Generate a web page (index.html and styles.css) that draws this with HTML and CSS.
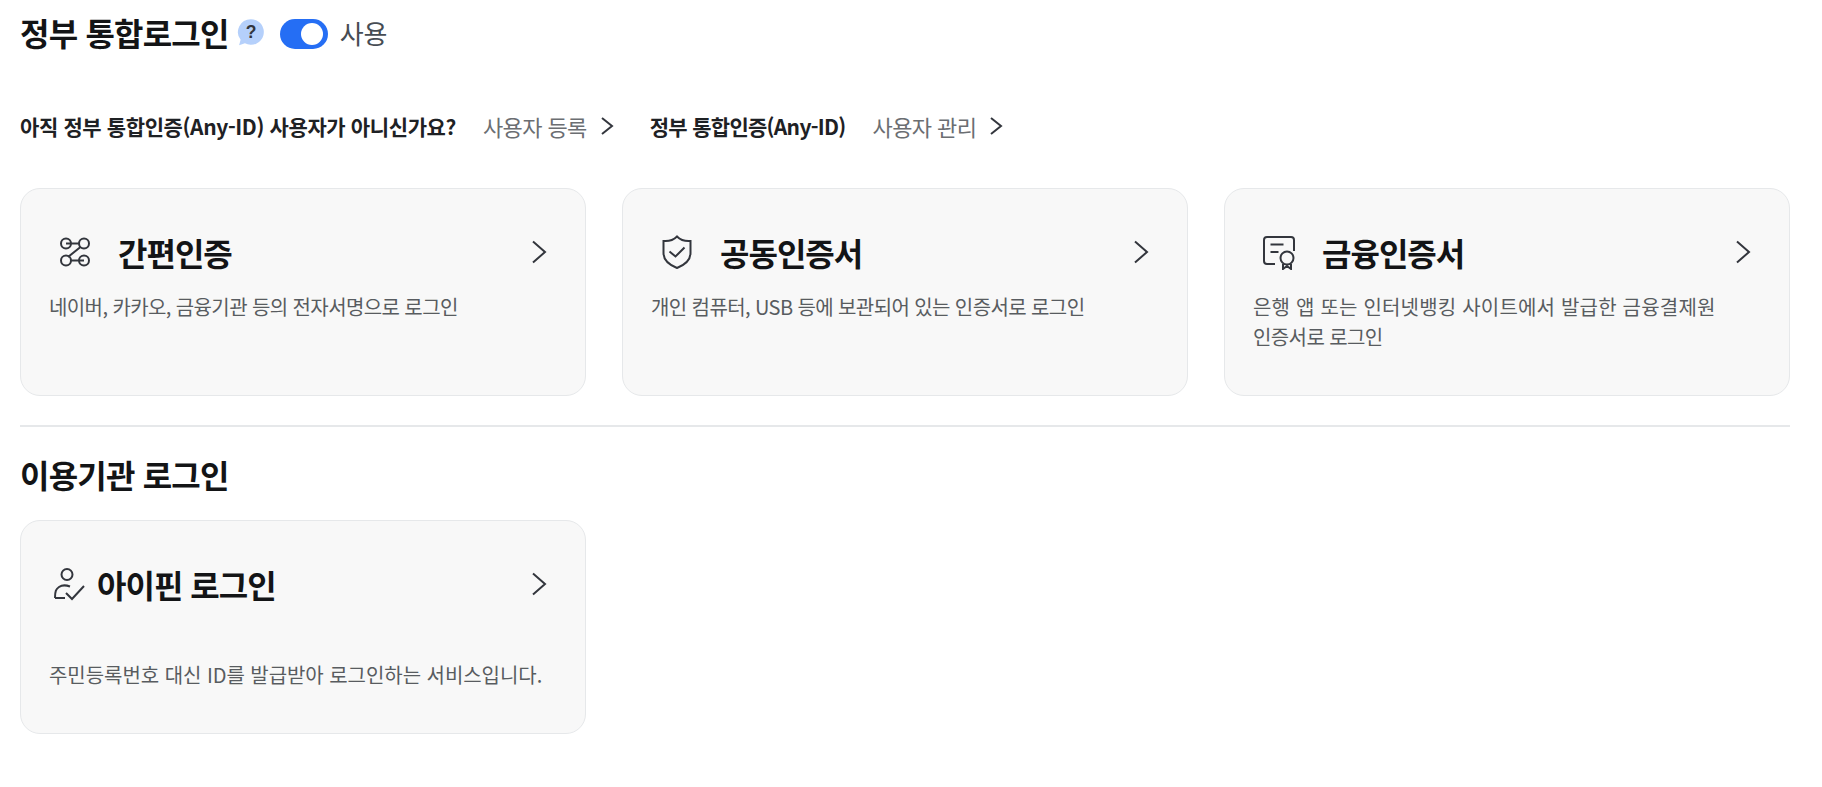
FILE: index.html
```html
<!DOCTYPE html>
<html lang="ko">
<head>
  <meta charset="UTF-8">
  <meta name="viewport" content="width=device-width, initial-scale=1.0">
  <title>정부 통합로그인</title>
  <link rel="stylesheet" href="styles.css">
</head>
<body>
  <div class="page">
    <div class="title-row">
      <h2 class="title">정부 통합로그인</h2>
      <svg class="help" width="28" height="28" viewBox="2 2 24 24">
        <path d="M14 3a11 11 0 1 1-5.2 20.7L3.800 25.400l1.300-4.700A11 11 0 0 1 14 3z" fill="#b5d0fb"/>
        <text x="14" y="19" text-anchor="middle" class="help-mark">?</text>
      </svg>
      <span class="toggle"><span class="toggle-knob"></span></span>
      <span class="toggle-label">사용</span>
    </div>

    <div class="links">
      <strong class="links-text">아직 정부 통합인증(Any-ID) 사용자가 아니신가요?</strong>
      <a class="link">사용자 등록
        <svg class="link-arrow" width="14" height="20" viewBox="0 0 14 20"><path d="M2 2l10 8-10 8"/></svg>
      </a>
      <strong class="links-text links-second">정부 통합인증(Any-ID)</strong>
      <a class="link">사용자 관리
        <svg class="link-arrow" width="14" height="20" viewBox="0 0 14 20"><path d="M2 2l10 8-10 8"/></svg>
      </a>
    </div>

    <div class="cards">
      <div class="card">
        <div class="card-head">
          <svg class="card-icon" width="36" height="36" viewBox="0 0 36 36">
            <circle cx="9" cy="9.500" r="5"/><circle cx="27" cy="9.500" r="5"/>
            <circle cx="9" cy="26.500" r="5"/><circle cx="27" cy="26.500" r="5"/>
            <path d="M9 9.500h13M14 26.500h13M11 23L23.500 13"/>
          </svg>
          <h3 class="card-title">간편인증</h3>
          <svg class="card-arrow" width="16" height="24" viewBox="0 0 16 24"><path d="M2 1.500L14 12 2 22.500"/></svg>
        </div>
        <p class="card-desc">네이버, 카카오, 금융기관 등의 전자서명으로 로그인</p>
      </div>

      <div class="card">
        <div class="card-head">
          <svg class="card-icon" width="36" height="36" viewBox="0 0 36 36">
            <path d="M18 2.500c3 3 8 5 13.500 4.500v12c0 7-6 12-13.500 15C10.500 31 4.500 26 4.500 19V7C10 7.500 15 5.500 18 2.500z"/>
            <path d="M10.500 17.500l6 5 9-9"/>
          </svg>
          <h3 class="card-title">공동인증서</h3>
          <svg class="card-arrow" width="16" height="24" viewBox="0 0 16 24"><path d="M2 1.500L14 12 2 22.500"/></svg>
        </div>
        <p class="card-desc">개인 컴퓨터, USB 등에 보관되어 있는 인증서로 로그인</p>
      </div>

      <div class="card">
        <div class="card-head">
          <svg class="card-icon" width="36" height="36" viewBox="0 0 36 36">
            <path d="M14 30H6a3 3 0 0 1-3-3V6a3 3 0 0 1 3-3h24a3 3 0 0 1 3 3v11"/>
            <path d="M9.500 10.500h13M9.500 18h8"/>
            <circle cx="26" cy="24" r="6.500"/>
            <path d="M22 30v5l4-3 4 3v-5"/>
          </svg>
          <h3 class="card-title">금융인증서</h3>
          <svg class="card-arrow" width="16" height="24" viewBox="0 0 16 24"><path d="M2 1.500L14 12 2 22.500"/></svg>
        </div>
        <p class="card-desc"><span class="desc-wide">은행 앱 또는 인터넷뱅킹 사이트에서 발급한 금융결제원</span><br>인증서로 로그인</p>
      </div>
    </div>

    <hr class="divider">

    <h2 class="title section-title">이용기관 로그인</h2>

    <div class="cards">
      <div class="card card-tall">
        <div class="card-head card-head-tight">
          <svg class="card-icon" width="36" height="36" viewBox="0 0 36 36">
            <circle cx="15" cy="8.500" r="5.500"/>
            <path d="M3 32c0-7 1-9 4-11 2.500-1.700 7-2 11-.5M3 32h10M14 27l6 6 12-13"/>
          </svg>
          <h3 class="card-title">아이핀 로그인</h3>
          <svg class="card-arrow" width="16" height="24" viewBox="0 0 16 24"><path d="M2 1.500L14 12 2 22.500"/></svg>
        </div>
        <p class="card-desc">주민등록번호 대신 ID를 발급받아 로그인하는 서비스입니다.</p>
      </div>
    </div>
  </div>
</body>
</html>
```

FILE: styles.css
```css
* {
  box-sizing: border-box;
}

body {
  margin: 0;
  font-family: "Noto Sans CJK KR", "Noto Sans", sans-serif;
  background-color: #fff;
  color: #1e2124;
}

.page {
  padding: 10px 32px 0 20px;
}

.title-row {
  display: flex;
  align-items: center;
  height: 44px;
}

.title {
  margin: 0;
  font-size: 32px;
  font-weight: 700;
  letter-spacing: -0.8px;
  line-height: 44px;
  color: #131416;
}

.help {
  margin-left: 8px;
}

.help-mark {
  font-family: "Liberation Sans", sans-serif;
  font-size: 15px;
  font-weight: 700;
  fill: #33363d;
}

.toggle {
  display: flex;
  align-items: center;
  justify-content: flex-end;
  width: 48px;
  height: 30px;
  margin-top: 4px;
  margin-left: 15px;
  padding-right: 5px;
  border-radius: 15px;
  background-color: #256ef4;
}

.toggle-knob {
  width: 22px;
  height: 22px;
  border-radius: 50%;
  background-color: #fff;
}

.toggle-label {
  margin-left: 12px;
  font-size: 26px;
  color: #464c53;
}

.links {
  display: flex;
  align-items: center;
  height: 32px;
  margin-top: 56px;
  font-size: 21px;
  letter-spacing: -0.38px;
}

.links-text {
  font-weight: 700;
  color: #1e2124;
}

.links-second {
  margin-left: 36px;
  letter-spacing: -0.7px;
}

.link {
  display: flex;
  align-items: center;
  gap: 13px;
  margin-left: 27px;
  font-size: 22px;
  letter-spacing: -0.6px;
  color: #6b6e72;
}

.link-arrow path,
.card-arrow path {
  fill: none;
  stroke: #33363d;
  stroke-width: 2;
}

.cards {
  display: grid;
  grid-template-columns: repeat(3, 1fr);
  gap: 36px;
}

.links + .cards {
  margin-top: 46px;
}

.card {
  height: 208px;
  padding: 41px 28px 0;
  border: 1px solid #e6e8ea;
  border-radius: 20px;
  background-color: #f8f8f8;
}

.card-tall {
  height: 214px;
}

.card-head {
  display: flex;
  align-items: center;
  height: 44px;
  padding-left: 8px;
}

.card-head-tight {
  padding-left: 3px;
}

.card-head-tight .card-title {
  margin-left: 9px;
}

.card-icon {
  flex: none;
}

.card-icon circle,
.card-icon path {
  fill: none;
  stroke: #33363d;
  stroke-width: 2;
}

.card-title {
  margin: 0 0 0 25px;
  font-size: 32px;
  font-weight: 700;
  letter-spacing: -1px;
  color: #131416;
}

.card-arrow {
  margin-left: auto;
  margin-right: 10px;
}

.card-desc {
  margin: 18px 0 0;
  font-size: 20px;
  letter-spacing: -0.6px;
  line-height: 30px;
  color: #585c60;
}

.desc-wide {
  letter-spacing: 0.2px;
}

.card-tall .card-desc {
  margin-top: 54px;
  letter-spacing: -0.05px;
}

.divider {
  height: 2px;
  margin: 29px 0 0;
  border: none;
  background-color: #e6e8ea;
}

.section-title {
  margin: 25px 0 24px;
}
```
